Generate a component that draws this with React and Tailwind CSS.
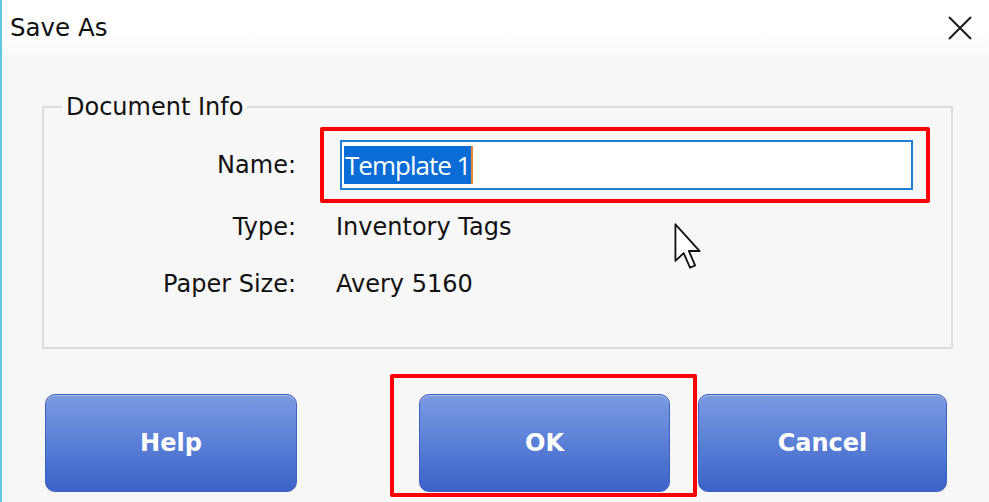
import { useState } from 'react'

const font = { fontFamily: '"DejaVu Sans", Verdana, sans-serif' }

function Field({ label, children, className = '' }) {
  return (
    <div className={`grid grid-cols-[252px_1fr] gap-x-[40px] items-center ${className}`}>
      <span className="text-right text-[24px] leading-[30px] text-[#111]">{label}</span>
      {children}
    </div>
  )
}

function BlueButton({ children, className = '' }) {
  return (
    <button
      className={`h-[98px] rounded-[10px] border border-[#3d5fc4] bg-gradient-to-b from-[#7b9be1] via-[#5a7fd6] to-[#3b63c9] text-white text-[24px] font-bold shadow-[inset_0_1px_0_rgba(255,255,255,0.35)] ${className}`}
    >
      {children}
    </button>
  )
}

export default function App() {
  const [name] = useState('Template 1')

  return (
    <div className="relative w-[989px] h-[502px] overflow-hidden flex flex-col border-l-2 border-[#62c6e0] bg-[#f7f7f7]" style={font}>
      {/* title bar */}
      <div className="h-[56px] shrink-0 flex items-center justify-between pl-[8px] pr-[17px] bg-gradient-to-b from-white via-white to-[#fafafa]">
        <span className="text-[24.5px] text-[#111] leading-none">Save As</span>
        <svg width="24" height="24" viewBox="0 0 24 24" className="text-[#1a1a1a]">
          <path d="M1 1 L23 23 M23 1 L1 23" stroke="currentColor" strokeWidth="2" fill="none" />
        </svg>
      </div>

      {/* group box */}
      <fieldset className="ml-[40px] mt-[39px] w-[911px] border-2 border-[#dcdcdc] pb-[48px]">
        <legend className="ml-[18px] px-[4px] text-[24px] leading-[24px] text-[#111]">Document Info</legend>

        <Field label="Name:" className="mt-[21px]">
          <div className="relative ml-[4px] w-[573px]">
            <div className="h-[50px] border-2 border-[#1f7fd6] bg-white flex items-center pl-[2px]">
              <span
                className="h-[38px] flex items-center bg-[#0a6cd6] text-white text-[26px] tracking-[-1px] px-[1px]"
                style={{ fontFamily: '"Open Sans", sans-serif' }}
              >
                {name}
              </span>
              <span className="w-[2px] h-[38px] bg-[#e88a2c]" />
            </div>
            <div className="pointer-events-none absolute -left-[20px] -top-[13px] -right-[17px] -bottom-[13px] border-[4px] border-[#ff0000] rounded-[2px]" />
          </div>
        </Field>

        <Field label="Type:" className="mt-[22px]">
          <span className="text-[24px] leading-[30px] text-[#111]">Inventory Tags</span>
        </Field>

        <Field label="Paper Size:" className="mt-[27px]">
          <span className="text-[24px] leading-[30px] text-[#111]">Avery 5160</span>
        </Field>
      </fieldset>

      {/* buttons */}
      <div className="flex mt-[45px] pl-[43px]">
        <BlueButton className="w-[252px]">Help</BlueButton>
        <div className="relative ml-[122px]">
          <BlueButton className="w-[251px]">OK</BlueButton>
          <div className="pointer-events-none absolute -left-[29px] -top-[20px] -right-[27px] -bottom-[5px] border-[4px] border-[#ff0000] rounded-[2px]" />
        </div>
        <BlueButton className="w-[249px] ml-[28px]">Cancel</BlueButton>
      </div>

      {/* mouse pointer */}
      <svg className="absolute left-[671px] top-[222px]" width="30" height="48" viewBox="0 0 13 21">
        <path d="M1 1 L1 17 L4.6 13.6 L7.4 20 L9.6 19 L6.9 12.7 L11.6 12.7 Z" fill="white" stroke="#111" strokeWidth="0.8" strokeLinejoin="round" />
      </svg>
    </div>
  )
}
